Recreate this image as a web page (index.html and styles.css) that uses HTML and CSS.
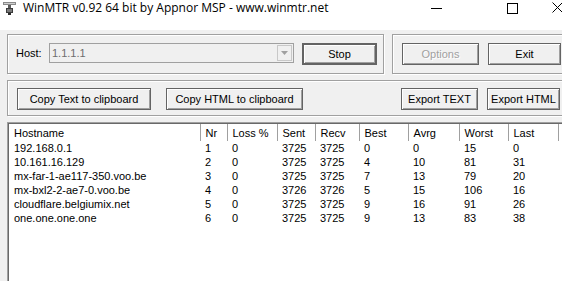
FILE: index.html
```html
<!DOCTYPE html>
<html lang="en">
<head>
    <meta charset="UTF-8">
    <title>WinMTR v0.92 64 bit by Appnor MSP - www.winmtr.net</title>
    <link rel="stylesheet" href="styles.css">
</head>
<body>
<div class="window">
    <!-- title bar -->
    <div class="titlebar">
        <svg class="app-icon" width="13" height="14" viewBox="0 0 13 14">
            <rect x="0" y="1" width="13" height="3" fill="#8a8a8a"/>
            <rect x="1" y="2" width="11" height="1" fill="#d0d0d0"/>
            <rect x="5" y="4" width="3" height="4" fill="#5a5a5a"/>
            <rect x="3" y="7" width="7" height="5" fill="#3c3c3c"/>
            <rect x="4" y="8" width="5" height="3" fill="#7a7a7a"/>
            <rect x="5" y="12" width="3" height="2" fill="#2a2a2a"/>
        </svg>
        <span class="title">WinMTR v0.92 64 bit by Appnor MSP - www.winmtr.net</span>
        <div class="controls">
            <span class="ctl-min"></span>
            <span class="ctl-max"></span>
            <svg class="ctl-close" width="11" height="11" viewBox="0 0 11 11">
                <path d="M0.5 0.5 L10.5 10.5 M10.5 0.5 L0.5 10.5" stroke="#000" stroke-width="1"/>
            </svg>
        </div>
    </div>

    <!-- dialog -->
    <div class="client">
        <div class="row">
            <div class="group host-group">
                <span class="host-label">Host:</span>
                <div class="combo">
                    <span class="combo-text">1.1.1.1</span>
                    <span class="combo-btn">
                        <svg width="7" height="4" viewBox="0 0 7 4"><path d="M0 0 H7 L3.5 4 Z" fill="#a0a0a0"/></svg>
                    </span>
                </div>
                <button class="btn btn-default stop-btn">Stop</button>
            </div>
            <div class="group action-group">
                <button class="btn options-btn" disabled>Options</button>
                <button class="btn exit-btn">Exit</button>
            </div>
        </div>

        <div class="group export-group">
            <button class="btn copy-text-btn">Copy Text to clipboard</button>
            <button class="btn copy-html-btn">Copy HTML to clipboard</button>
            <button class="btn export-text-btn">Export TEXT</button>
            <button class="btn exit-btn">Export HTML</button>
        </div>

        <!-- hop list -->
        <div class="listview">
            <table class="hops">
                <colgroup>
                    <col class="c-host">
                    <col class="c-nr">
                    <col class="c-loss">
                    <col class="c-sent">
                    <col class="c-recv">
                    <col class="c-best">
                    <col class="c-avrg">
                    <col class="c-worst">
                    <col class="c-last">
                    <col>
                </colgroup>
                <thead>
                    <tr>
                        <th>Hostname</th><th>Nr</th><th>Loss %</th><th>Sent</th><th>Recv</th>
                        <th>Best</th><th>Avrg</th><th>Worst</th><th>Last</th><th></th>
                    </tr>
                </thead>
                <tbody>
                    <tr><td>192.168.0.1</td><td>1</td><td>0</td><td>3725</td><td>3725</td><td>0</td><td>0</td><td>15</td><td>0</td><td></td></tr>
                    <tr><td>10.161.16.129</td><td>2</td><td>0</td><td>3725</td><td>3725</td><td>4</td><td>10</td><td>81</td><td>31</td><td></td></tr>
                    <tr><td>mx-far-1-ae117-350.voo.be</td><td>3</td><td>0</td><td>3725</td><td>3725</td><td>7</td><td>13</td><td>79</td><td>20</td><td></td></tr>
                    <tr><td>mx-bxl2-2-ae7-0.voo.be</td><td>4</td><td>0</td><td>3726</td><td>3726</td><td>5</td><td>15</td><td>106</td><td>16</td><td></td></tr>
                    <tr><td>cloudflare.belgiumix.net</td><td>5</td><td>0</td><td>3725</td><td>3725</td><td>9</td><td>16</td><td>91</td><td>26</td><td></td></tr>
                    <tr><td>one.one.one.one</td><td>6</td><td>0</td><td>3725</td><td>3725</td><td>9</td><td>13</td><td>83</td><td>38</td><td></td></tr>
                </tbody>
            </table>
        </div>
    </div>
</div>
</body>
</html>
```

FILE: styles.css
```css
/* base */
body {
    margin: 0;
    width: 562px;
    height: 281px;
    overflow: hidden;
    background-color: #f0f0f0;
    font-family: "Liberation Sans", Arial, sans-serif;
    font-size: 11px;
    color: #000;
}

.window {
    width: 562px;
    overflow: hidden;
}

/* title bar */
.titlebar {
    height: 30px;
    background-color: #fff;
    display: flex;
    align-items: flex-start;
    position: relative;
}
.app-icon {
    margin: 1px 0 0 3px;
}
.title {
    margin-left: 7px;
    font-family: "Open Sans", "Noto Sans", sans-serif;
    font-size: 12px;
    line-height: 16px;
    color: #000;
}
.controls {
    position: absolute;
    top: 0;
    left: 0;
    width: 562px;
    height: 20px;
}
.ctl-min {
    position: absolute;
    left: 431px;
    top: 8px;
    width: 11px;
    border-top: 1px solid #000;
}
.ctl-max {
    position: absolute;
    left: 507px;
    top: 3px;
    width: 9px;
    height: 9px;
    border: 1px solid #000;
}
.ctl-close {
    position: absolute;
    left: 552px;
    top: 2px;
}

/* dialog area */
.client {
    width: 573px;
    padding: 4px 0 0 7px;
}
.row {
    display: flex;
    gap: 8px;
}
.group {
    border: 1px solid #a0a0a0;
    box-shadow: inset 1px 1px 0 #fff, 1px 1px 0 #fff;
    box-sizing: border-box;
    display: flex;
    align-items: flex-start;
}

.host-group {
    width: 377px;
    height: 40px;
    padding: 8px 0 0 8px;
}
.host-label {
    width: 33px;
    line-height: 20px;
}
.combo {
    width: 245px;
    height: 20px;
    box-sizing: border-box;
    border: 1px solid #a0a0a0;
    background-color: #f0f0f0;
    display: flex;
    align-items: center;
    justify-content: space-between;
}
.combo-text {
    color: #6d6d6d;
    padding-left: 2px;
}
.combo-btn {
    width: 15px;
    height: 16px;
    margin-right: 1px;
    box-sizing: border-box;
    border: 1px solid #c8c8c8;
    display: flex;
    align-items: center;
    justify-content: center;
}

.btn {
    font-family: inherit;
    font-size: 11px;
    height: 22px;
    padding: 0;
    box-sizing: border-box;
    background-color: #f0f0f0;
    color: #000;
    border: 1px solid #646464;
    box-shadow: inset 1px 1px 0 #fff, inset -1px -1px 0 #a0a0a0;
}
.btn:disabled {
    color: #a0a0a0;
    text-shadow: 1px 1px 0 #fff;
}
.btn-default {
    border: 2px solid #646464;
}
.stop-btn {
    width: 75px;
    margin-left: 8px;
}

.action-group {
    flex: 1;
    height: 40px;
    padding: 8px 0 0 9px;
    gap: 9px;
}
.options-btn,
.export-text-btn {
    width: 77px;
}
.exit-btn {
    width: 73px;
}

.export-group {
    margin-top: 6px;
    height: 36px;
    padding: 7px 0 0 9px;
    gap: 9px;
}
.copy-text-btn {
    width: 134px;
}
.copy-html-btn {
    width: 137px;
    margin-left: 6px;
}
.export-text-btn {
    margin-left: 89px;
}

/* list view */
.listview {
    margin-top: 6px;
    height: 158px;
    overflow: hidden;
    background-color: #fff;
    border-top: 1px solid #a0a0a0;
    border-left: 1px solid #a0a0a0;
    box-shadow: inset 1px 1px 0 #696969;
    padding: 1px 0 0 1px;
}
.hops {
    border-collapse: collapse;
    table-layout: fixed;
    width: 570px;
}
.c-host { width: 191px; }
.c-nr { width: 27px; }
.c-loss { width: 50px; }
.c-sent { width: 38px; }
.c-recv { width: 44px; }
.c-best { width: 49px; }
.c-avrg { width: 51px; }
.c-worst { width: 49px; }
.c-last { width: 50px; }

.hops th {
    font-weight: normal;
    text-align: left;
    height: 17px;
    padding: 0 0 0 5px;
    border-right: 1px solid #a0a0a0;
    white-space: nowrap;
}
.hops td {
    height: 14px;
    padding: 0 0 0 5px;
    line-height: 14px;
    white-space: nowrap;
    overflow: hidden;
}
```
